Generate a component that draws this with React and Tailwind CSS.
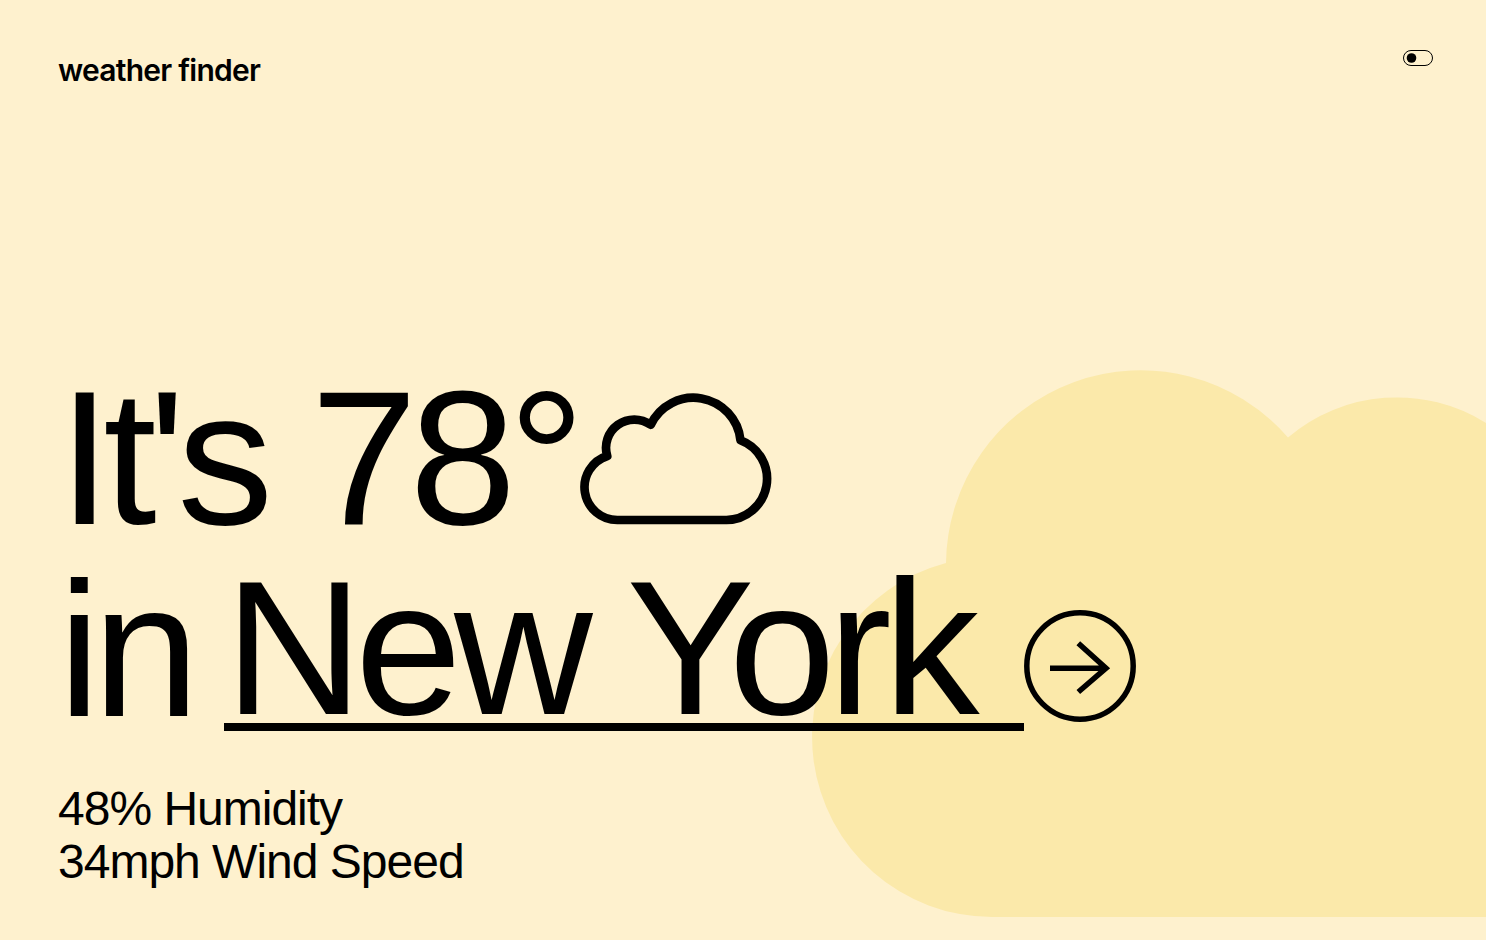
import { useState } from "react";

function BackdropCloud() {
  return (
    <svg
      aria-hidden="true"
      className="pointer-events-none absolute right-0 bottom-[23px] h-[547px] w-[674px]"
      viewBox="0 0 674 547"
      fill="#fbe9aa"
    >
      <path d="M180 547A180 180 0 0 1 134 193A194.8 194.8 0 0 1 476 67.5A168 168 0 0 1 674 53V547Z" />
    </svg>
  );
}

function CloudIcon() {
  return (
    <svg
      role="img"
      aria-label="Cloudy"
      className="size-48 shrink-0 overflow-visible"
      viewBox="0 0 192 192"
      fill="none"
      stroke="currentColor"
      strokeWidth="8.7"
      strokeLinejoin="round"
    >
      <path d="M37.5 158A32.8 32.8 0 0 1 27.2 94A28.3 28.3 0 0 1 70.7 62.8A47.3 47.3 0 0 1 160.5 78.3A41.2 41.2 0 0 1 146.5 158Z" />
    </svg>
  );
}

function ArrowIcon() {
  return (
    <svg
      aria-hidden="true"
      className="size-28"
      viewBox="0 0 112 112"
      fill="none"
      stroke="currentColor"
      strokeWidth="5.5"
    >
      <circle cx="56" cy="56" r="53.2" />
      <path d="M26 58.2H82M54.3 33.3L82 58.2L54.3 82" strokeMiterlimit="10" />
    </svg>
  );
}

function ThemeSwitch() {
  const [on, setOn] = useState(false);
  return (
    <button
      type="button"
      role="switch"
      aria-checked={on}
      aria-label="Dark theme"
      onClick={() => setOn(!on)}
      className="h-4 w-[30px] cursor-pointer"
    >
      <svg aria-hidden="true" className="h-4 w-[30px]" viewBox="0 0 30 16">
        <rect x="0.5" y="0.5" width="29" height="15" rx="7.5" fill="none" stroke="currentColor" />
        <circle cx={on ? 21.5 : 8.5} cy="8" r="4.8" fill="currentColor" />
      </svg>
    </button>
  );
}

export default function App() {
  const [city, setCity] = useState("New York");
  return (
    <div className="relative flex min-h-screen flex-col justify-between overflow-hidden bg-[#fef1ce] pt-[50px] pr-[53px] pb-[52px] pl-[58px] font-['Liberation_Sans',Arial,sans-serif] text-black">
      <BackdropCloud />
      <header className="relative flex items-start justify-between">
        <a
          href="#"
          className="font-['Inter','Liberation_Sans',sans-serif] text-[30px] leading-10 font-semibold tracking-tight"
        >
          weather finder
        </a>
        <ThemeSwitch />
      </header>
      <main className="relative">
        <h1 className="flex items-center gap-[3px] text-[192px] leading-[192px] tracking-[-8px] whitespace-nowrap">
          It's 78°
          <CloudIcon />
        </h1>
        <form
          className="flex items-end gap-[33px] text-[192px] leading-[192px] tracking-[-8px]"
          onSubmit={(e) => e.preventDefault()}
        >
          <label htmlFor="city">in</label>
          <div className="flex items-end pb-[15px]">
            <input
              id="city"
              type="text"
              value={city}
              onChange={(e) => setCity(e.target.value)}
              className="h-40 w-[800px] border-b-8 border-black bg-transparent leading-[152px] outline-none"
            />
            <button type="submit" aria-label="Search" className="mb-[9px] size-28 cursor-pointer">
              <ArrowIcon />
            </button>
          </div>
        </form>
        <div className="mt-9 text-5xl leading-[53px] tracking-[-1px]">
          <p>48% Humidity</p>
          <p>34mph Wind Speed</p>
        </div>
      </main>
    </div>
  );
}
